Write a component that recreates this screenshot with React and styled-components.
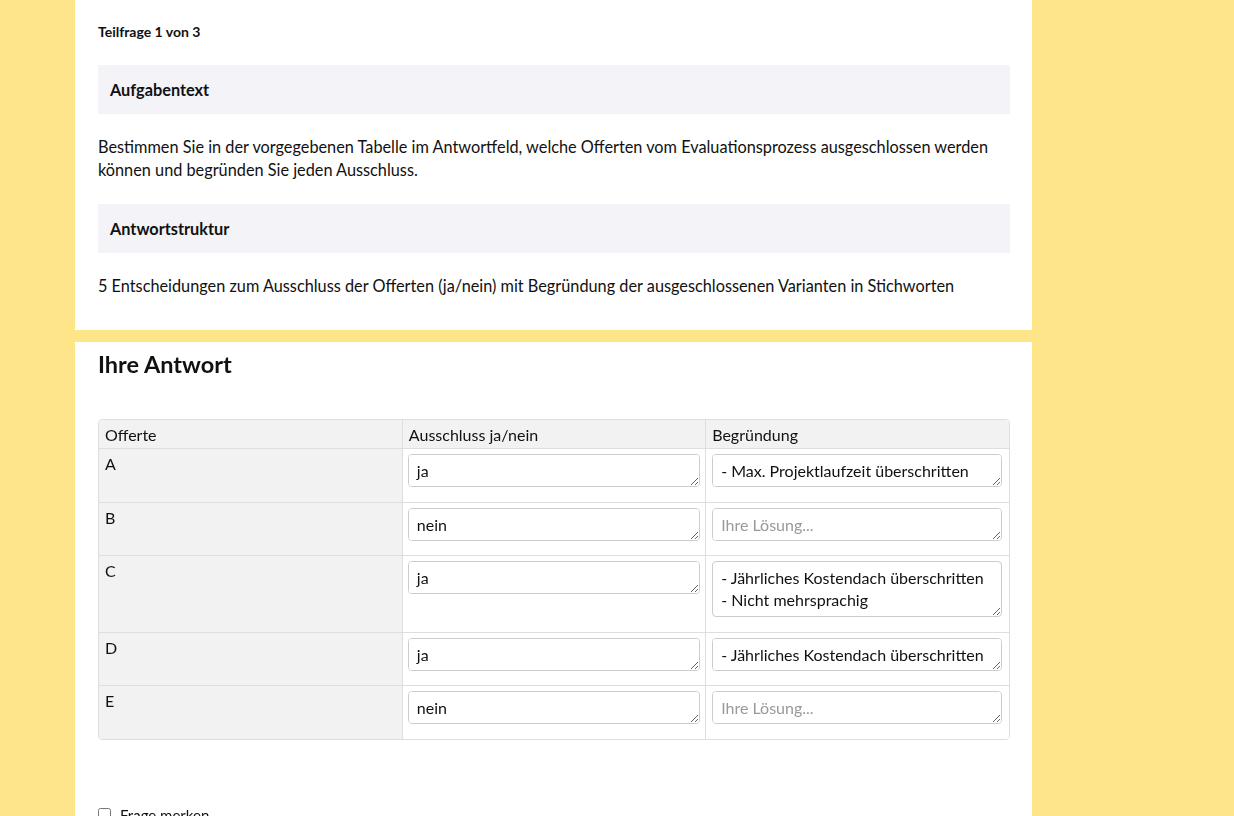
import React from 'react';
import styled, {createGlobalStyle} from 'styled-components';

const GlobalStyle = createGlobalStyle`
  body {
    margin: 0;
    background-color: #ffe58a;
    font-family: 'Lato', 'Noto Sans', sans-serif;
    color: #111;
  }
`;

const rows = [
  {offer: 'A', decision: 'ja', reason: '- Max. Projektlaufzeit überschritten', tall: false},
  {offer: 'B', decision: 'nein', reason: '', tall: false},
  {offer: 'C', decision: 'ja', reason: '- Jährliches Kostendach überschritten\n- Nicht mehrsprachig', tall: true},
  {offer: 'D', decision: 'ja', reason: '- Jährliches Kostendach überschritten', tall: false},
  {offer: 'E', decision: 'nein', reason: '', tall: false}
];

const Page = styled.div`
  display: flex;
  flex-direction: column;
  gap: 12px;
  width: 957px;
  margin-left: 75px;
`;

const Card = styled.section`
  background-color: #fff;
  padding: ${props => props.$top || '0'} 22px 0 23px;
  padding-bottom: ${props => props.$bottom || '0'};
`;

const SubTitle = styled.div`
  font-size: 14px;
  font-weight: 700;
  line-height: 16px;
  margin-bottom: 25px;
`;

const SectionBar = styled.div`
  background-color: #f3f3f8;
  height: 49px;
  display: flex;
  align-items: center;
  padding: 0 12px;
  font-size: 16.3px;
  font-weight: 700;
`;

const Paragraph = styled.p`
  margin: ${props => props.$before || '21px'} 0 ${props => props.$after || '23px'};
  font-size: 16.3px;
  line-height: 23px;
`;

const Heading = styled.h2`
  margin: 0;
  padding-top: 8px;
  font-size: 23.5px;
  line-height: 28px;
  font-weight: 700;
`;

const TableWrap = styled.div`
  margin-top: 41px;
  border: 1px solid #dedede;
  border-radius: 4px;
  overflow: hidden;
`;

const Table = styled.table`
  width: 100%;
  border-collapse: collapse;
  table-layout: fixed;
  font-size: 16px;
`;

const HeadCell = styled.th`
  background-color: #f2f2f2;
  text-align: left;
  font-weight: 400;
  height: 28px;
  padding: 0 6px;
  border-left: 1px solid #dedede;
  &:first-child { border-left: none; }
`;

const Cell = styled.td`
  vertical-align: top;
  padding: 5px 5px 14.5px;
  border-top: 1px solid #dedede;
  border-left: 1px solid #dedede;
  background-color: ${props => props.$shade ? '#f2f2f2' : '#fff'};
  &:first-child { border-left: none; padding: 5px 6px; }
  &:last-child { padding-left: 6px; padding-right: 7px; }
`;

const Answer = styled.textarea`
  display: block;
  box-sizing: border-box;
  width: 100%;
  height: ${props => props.$tall ? '56px' : '33px'};
  padding: 5px 8px;
  border: 1px solid #cccccc;
  border-radius: 4px;
  font-family: 'Lato', 'Noto Sans', sans-serif;
  font-size: 16px;
  line-height: 22px;
  color: #111;
  resize: vertical;
  &::placeholder { color: #999; }
`;

const Marker = styled.label`
  display: flex;
  align-items: center;
  gap: 9px;
  margin-top: 66px;
  font-size: 15px;
  padding-bottom: 40px;
  input { margin: 0; width: 13px; height: 13px; }
`;

export default function App() {
  return (
    <Page>
      <GlobalStyle />
      <Card $top="24px" $bottom="33px">
        <SubTitle>Teilfrage 1 von 3</SubTitle>
        <SectionBar>Aufgabentext</SectionBar>
        <Paragraph>
          Bestimmen Sie in der vorgegebenen Tabelle im Antwortfeld, welche Offerten vom Evaluationsprozess ausgeschlossen werden können und begründen Sie jeden Ausschluss.
        </Paragraph>
        <SectionBar>Antwortstruktur</SectionBar>
        <Paragraph $after="0">
          5 Entscheidungen zum Ausschluss der Offerten (ja/nein) mit Begründung der ausgeschlossenen Varianten in Stichworten
        </Paragraph>
      </Card>
      <Card>
        <Heading>Ihre Antwort</Heading>
        <TableWrap>
          <Table>
            <thead>
              <tr>
                <HeadCell>Offerte</HeadCell>
                <HeadCell>Ausschluss ja/nein</HeadCell>
                <HeadCell>Begründung</HeadCell>
              </tr>
            </thead>
            <tbody>
              {rows.map((row) => (
                <tr key={row.offer}>
                  <Cell $shade>{row.offer}</Cell>
                  <Cell>
                    <Answer defaultValue={row.decision} placeholder="Ihre Lösung..." />
                  </Cell>
                  <Cell>
                    <Answer $tall={row.tall} defaultValue={row.reason} placeholder="Ihre Lösung..." />
                  </Cell>
                </tr>
              ))}
            </tbody>
          </Table>
        </TableWrap>
        <Marker>
          <input type="checkbox" />
          Frage merken
        </Marker>
      </Card>
    </Page>
  );
}
